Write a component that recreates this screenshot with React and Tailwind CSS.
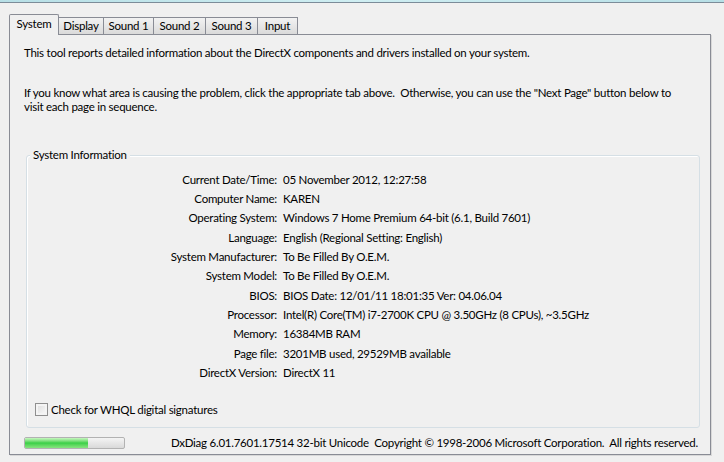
import React from "react";

const rows = [
  ["Current Date/Time:", "05 November 2012, 12:27:58"],
  ["Computer Name:", "KAREN"],
  ["Operating System:", "Windows 7 Home Premium 64-bit (6.1, Build 7601)"],
  ["Language:", "English (Regional Setting: English)"],
  ["System Manufacturer:", "To Be Filled By O.E.M."],
  ["System Model:", "To Be Filled By O.E.M."],
  ["BIOS:", "BIOS Date: 12/01/11 18:01:35 Ver: 04.06.04"],
  ["Processor:", "Intel(R) Core(TM) i7-2700K CPU @ 3.50GHz (8 CPUs), ~3.5GHz"],
  ["Memory:", "16384MB RAM"],
  ["Page file:", "3201MB used, 29529MB available"],
  ["DirectX Version:", "DirectX 11"],
];

const tabs = [
  { label: "System", w: "w-[50px]", selected: true },
  { label: "Display", w: "w-[45px]" },
  { label: "Sound 1", w: "w-[50px]" },
  { label: "Sound 2", w: "w-[52px]" },
  { label: "Sound 3", w: "w-[52px]" },
  { label: "Input", w: "w-[40px]" },
];

export default function App() {
  return (
    <div
      className="w-[724px] h-[462px] bg-[#f0f0f0] overflow-hidden text-[11.5px] tracking-[-0.25px] text-[#000] leading-[14px]"
      style={{ fontFamily: 'Lato, "Open Sans", sans-serif' }}
    >
      <div className="h-[2px] bg-gradient-to-r from-[#b7dfe6] via-[#cfeef2] to-[#b7dfe6]" />
      <div className="h-px bg-[#7c8c99]" />
      <div className="flex items-end pl-[9px] h-[31px] relative z-10">
        {tabs.map((t) =>
          t.selected ? (
            <div
              key={t.label}
              className={`${t.w} h-[21px] -mb-px bg-[#f0f0f0] border border-b-0 border-[#898c95] rounded-t-[2px] flex items-start justify-center pt-[2px]`}
            >
              {t.label}
            </div>
          ) : (
            <div
              key={t.label}
              className={`${t.w} h-[17px] border border-b-0 border-l-0 border-[#898c95] bg-gradient-to-b from-[#f2f2f2] to-[#dadada] flex items-center justify-center`}
            >
              {t.label}
            </div>
          )
        )}
      </div>
      <div className="ml-[9px] w-[702px] h-[421px] border border-[#898c95] bg-[#f0f0f0] flex flex-col shadow-[1px_1px_0_#d8d8d8]">
        <p className="ml-[14px] mt-[11px]">
          This tool reports detailed information about the DirectX components and drivers installed on your system.
        </p>
        <p className="ml-[14px] mt-[26px] w-[662px]">
          If you know what area is causing the problem, click the appropriate tab above.&nbsp; Otherwise, you can use the "Next Page" button below to visit each page in sequence.
        </p>
        <div className="relative ml-[16px] mt-[41px] w-[674px] h-[273px] border border-[#d5dfe5] rounded-[3px] shadow-[inset_1px_1px_0_#ffffff]">
          <span className="absolute -top-[8px] left-[3px] px-[3px] bg-[#f0f0f0]">System Information</span>
          <div className="pt-[14px] flex flex-col">
            {rows.map(([k, v]) => (
              <div key={k} className="flex h-[19.33px] items-center">
                <div className="w-[250px] text-right">{k}</div>
                <div className="ml-[6px]">{v}</div>
              </div>
            ))}
          </div>
          <div className="flex items-center ml-[8px] mt-[20px]">
            <div className="w-[13px] h-[13px] border border-[#8f8f8f] bg-gradient-to-br from-[#dcdcdc] to-[#fbfbfb] shadow-[inset_0_0_0_2px_#f4f4f4]" />
            <span className="ml-[3px]">Check for WHQL digital signatures</span>
          </div>
        </div>
        <div className="flex items-center mt-[8px] ml-[14px] mr-[12px] h-[13px]">
          <div className="w-[101px] h-[12px] border border-[#b2b2b2] rounded-[2px] bg-gradient-to-b from-[#f4f4f4] to-[#d9d9d9] overflow-hidden">
            <div className="w-[63px] h-full bg-gradient-to-b from-[#c6f7c0] via-[#37d046] to-[#86e47f]" />
          </div>
          <div className="ml-auto whitespace-nowrap">
            DxDiag 6.01.7601.17514 32-bit Unicode&nbsp; Copyright © 1998-2006 Microsoft Corporation.&nbsp; All rights reserved.
          </div>
        </div>
      </div>
    </div>
  );
}
